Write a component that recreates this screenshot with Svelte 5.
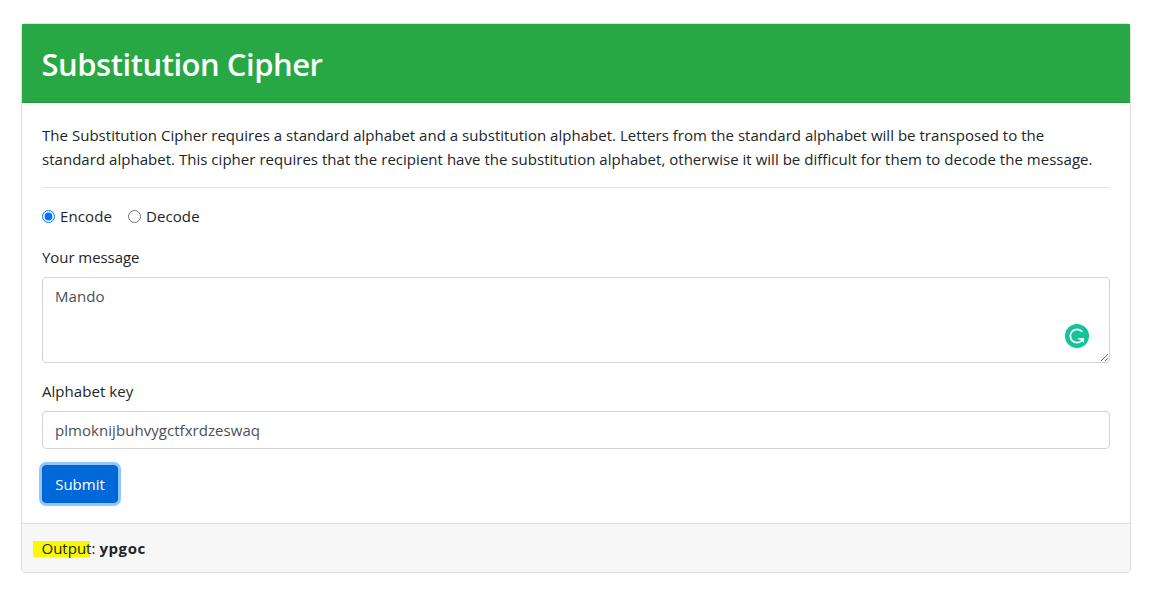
<script lang="ts">
    let mode = $state("encode");
    let message = $state("Mando");
    let key = $state("plmoknijbuhvygctfxrdzeswaq");
    let output = $state("ypgoc");

    const STANDARD = "abcdefghijklmnopqrstuvwxyz";

    function submit(e: SubmitEvent) {
        e.preventDefault();

        const from = mode === "encode" ? STANDARD : key;
        const to = mode === "encode" ? key : STANDARD;

        output = message
            .toLowerCase()
            .split("")
            .map((c) => {
                const i = from.indexOf(c);
                return i < 0 ? c : to[i];
            })
            .join("");
    }
</script>

<div class="card">
    <div class="card-header">
        <h2>Substitution Cipher</h2>
    </div>

    <form class="card-body" onsubmit={submit}>
        <p>
            The Substitution Cipher requires a standard alphabet and a substitution alphabet. Letters from the standard alphabet will be transposed to the standard alphabet. This cipher requires that the recipient have the substitution alphabet, otherwise it will be difficult for them to decode the message.
        </p>

        <hr>

        <div class="modes">
            <label class="check">
                <input type="radio" value="encode" bind:group={mode} />
                <span>Encode</span>
            </label>
            <label class="check">
                <input type="radio" value="decode" bind:group={mode} />
                <span>Decode</span>
            </label>
        </div>

        <div class="form-group">
            <label class="message-label" for="message">Your message</label>
            <div class="message">
                <textarea id="message" class="form-control" rows="3" spellcheck="false" bind:value={message}></textarea>
                <svg class="badge" viewBox="0 0 24 24" width="24" height="24" aria-hidden="true">
                    <circle cx="12" cy="12" r="12" fill="#15c39a" />
                    <path d="M16.9 7.4A6.7 6.7 0 1 0 16.6 16.9L18.2 14.6" fill="none" stroke="#fff" stroke-width="1.7" stroke-linecap="round" />
                    <path d="M13.2 13.9H19V18.9L17.4 17.6L15.4 15.6H13.2Z" fill="#fff" />
                </svg>
            </div>
        </div>

        <div class="form-group">
            <label for="key">Alphabet key</label>
            <input id="key" class="form-control" type="text" spellcheck="false" bind:value={key} />
        </div>

        <button class="btn">Submit</button>
    </form>

    <div class="card-footer">
        <mark>Output</mark>: <strong>{output}</strong>
    </div>
</div>

<style>
:global(body) {
    background: #fff;
}

.card {
    box-sizing: border-box;
    width: 1110px;
    margin: 23px 0 0 21px;
    border: 1px solid #dfdfdf;
    border-radius: 4px;
    color: #212529;
    font-family: "Segoe UI", "Open Sans", sans-serif;
    font-size: 15px;
    line-height: 24px;
    letter-spacing: 0.05px;
}

.card-header {
    padding: 21px 19.5px 19px;
    background: #28a745;
    border-bottom: 1px solid #24963e;
    color: #fff;
}

h2 {
    margin: 0;
    font-size: 31px;
    font-weight: 600;
    line-height: 38.4px;
    letter-spacing: -0.48px;
}

.card-body {
    padding: 20px;
}

p {
    margin: 0 0 16px;
    padding-right: 10px;
    letter-spacing: 0.03px;
}

hr {
    margin: 0 0 16px;
    border: 0;
    border-top: 1px solid #e5e5e5;
}

.modes {
    display: flex;
    gap: 16px;
    margin-bottom: 17px;
}

.check {
    display: flex;
    align-items: center;
    gap: 5px;
    letter-spacing: 0.1px;
}

.check input {
    width: 13px;
    height: 13px;
    margin: 0;
}

.form-group {
    margin-bottom: 16px;
}

.form-group label {
    display: block;
    width: fit-content;
    margin-bottom: 8px;
}

.message-label {
    letter-spacing: -0.06px;
}

.message {
    position: relative;
}

.form-control {
    display: block;
    box-sizing: border-box;
    width: 100%;
    height: 38px;
    margin: 0;
    padding: 6px 12px;
    border: 1px solid #ced4da;
    border-radius: 4px;
    background: #fff;
    color: #495057;
    font: inherit;
    letter-spacing: inherit;
}

textarea.form-control {
    height: 86px;
    resize: vertical;
    overflow: auto;
}

.badge {
    position: absolute;
    right: 21px;
    bottom: 15px;
}

.btn {
    display: block;
    box-sizing: border-box;
    width: 76px;
    height: 38px;
    padding: 6px 0;
    border: 1px solid #0062cc;
    border-radius: 4px;
    background: #0069d9;
    box-shadow: 0 0 0 3px #93c6ff;
    color: #fff;
    font: inherit;
    outline: none;
}

.card-footer {
    padding: 12px 20px;
    border-top: 1px solid #dfdfdf;
    background: #f7f7f7;
    border-radius: 0 0 3px 3px;
}

mark {
    margin-left: -9px;
    padding-left: 8.5px;
    background: linear-gradient(#f9f900, #f9f900) 0 60% / calc(100% - 1px) 16px no-repeat;
    color: inherit;
    letter-spacing: 0;
}

strong {
    font-weight: 700;
    letter-spacing: 0.6px;
}
</style>
